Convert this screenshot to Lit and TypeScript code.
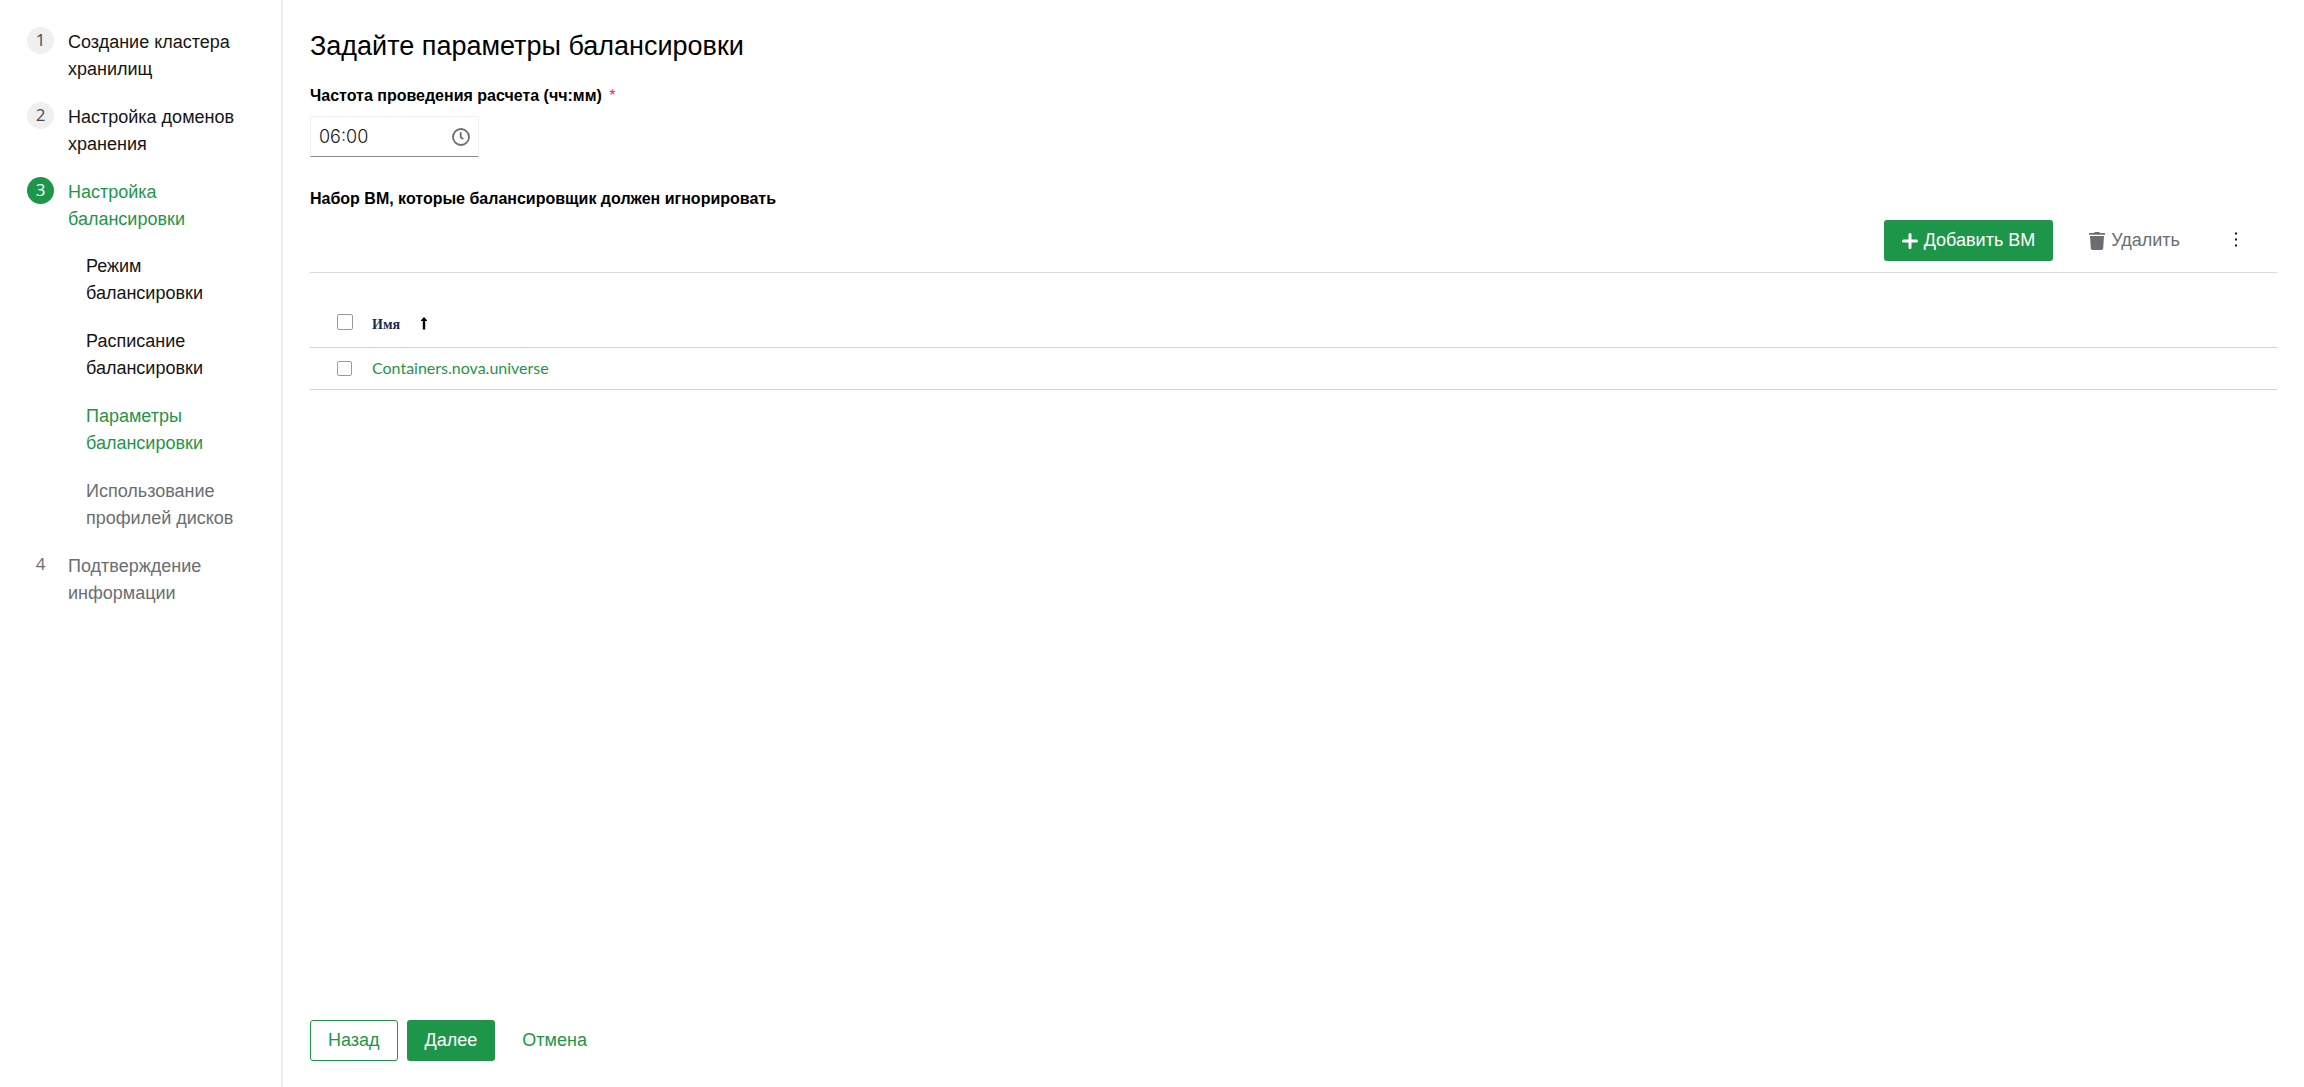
import { LitElement, html, css, svg, nothing } from "lit";
import { customElement, property, state } from "lit/decorators.js";
import { classMap } from "lit/directives/class-map.js";

type StepStatus = "done" | "current" | "pending";

interface Step {
  label: string;
  status: StepStatus;
  children?: Step[];
}

const STEPS: Step[] = [
  { label: "Создание кластера хранилищ", status: "done" },
  { label: "Настройка доменов хранения", status: "done" },
  {
    label: "Настройка балансировки",
    status: "current",
    children: [
      { label: "Режим балансировки", status: "done" },
      { label: "Расписание балансировки", status: "done" },
      { label: "Параметры балансировки", status: "current" },
      { label: "Использование профилей дисков", status: "pending" },
    ],
  },
  { label: "Подтверждение информации", status: "pending" },
];

@customElement("wizard-nav")
export class WizardNav extends LitElement {
  @property({ attribute: false }) steps: Step[] = [];

  static styles = css`
    :host {
      display: block;
      box-sizing: border-box;
      padding: 27px;
      border-right: 2px solid #ededed;
    }
    .list,
    .sublist {
      list-style: none;
      margin: 0;
      padding: 0;
      display: flex;
      flex-direction: column;
    }
    .list {
      gap: 19px;
    }
    .sublist {
      gap: 21px;
      padding: 20px 0 0 59px;
    }
    .step {
      display: grid;
      grid-template-columns: 27px 1fr;
      column-gap: 14px;
      align-items: start;
      width: 100%;
      text-align: left;
    }
    button {
      margin: 0;
      padding: 0;
      border: 0;
      background: none;
      cursor: pointer;
      text-align: left;
      font: 18px/27px "Liberation Sans", Arial, sans-serif;
      color: #151515;
    }
    .number {
      width: 27px;
      height: 27px;
      border-radius: 50%;
      background: #f0f0f0;
      color: #4a4d50;
      font: 17px/26px "Open Sans", sans-serif;
      text-align: center;
    }
    .label {
      padding-top: 2px;
    }
    .current {
      color: #1e9649;
    }
    .current .number {
      background: #1e9649;
      color: #fff;
    }
    .pending {
      color: #6a6e73;
      cursor: default;
    }
    .pending .number {
      background: none;
      color: #6a6e73;
    }
  `;

  private classes(step: Step, top: boolean) {
    return classMap({
      step: top,
      current: step.status === "current",
      pending: step.status === "pending",
    });
  }

  render() {
    return html`
      <nav aria-label="Шаги">
        <ol class="list">
          ${this.steps.map(
            (step, i) => html`
              <li>
                <button type="button" class=${this.classes(step, true)} ?disabled=${step.status === "pending"}>
                  <span class="number">${i + 1}</span>
                  <span class="label">${step.label}</span>
                </button>
                ${step.children
                  ? html`<ol class="sublist">
                      ${step.children.map(
                        (child) => html`<li>
                          <button
                            type="button"
                            class=${this.classes(child, false)}
                            ?disabled=${child.status === "pending"}
                          >${child.label}</button>
                        </li>`
                      )}
                    </ol>`
                  : nothing}
              </li>
            `
          )}
        </ol>
      </nav>
    `;
  }
}

const plusIcon = svg`<svg viewBox="0 0 16 16" width="16" height="16" aria-hidden="true">
  <path d="M8 1.500v13M1.500 8h13" fill="none" stroke="currentColor" stroke-width="3" stroke-linecap="round"/>
</svg>`;

const trashIcon = svg`<svg viewBox="0 0 16 18" width="16" height="18" aria-hidden="true">
  <path fill="currentColor" d="M0.500 1H5L5.600 0.300Q5.800 0 6.200 0h3.600Q10.200 0 10.400 0.300L11 1h4.500q0.500 0 0.500 0.500V2.800H0V1.500Q0 1 0.500 1z"/>
  <path fill="currentColor" d="M1 4h14l-0.800 12.300q-0.100 1.700-1.800 1.700H3.600q-1.700 0-1.800-1.700z"/>
</svg>`;

const clockIcon = svg`<svg viewBox="0 0 18 18" width="18" height="18" aria-hidden="true">
  <circle cx="9" cy="9" r="8" fill="none" stroke="currentColor" stroke-width="1.800"/>
  <path d="M8.700 4.200v5l2.600 1.900" fill="none" stroke="currentColor" stroke-width="1.800"/>
</svg>`;

const kebabIcon = svg`<svg viewBox="0 0 4 18" width="4" height="18" aria-hidden="true">
  <rect x="1" y="0.500" width="2" height="2" fill="currentColor"/>
  <rect x="1" y="6.500" width="2" height="2" fill="currentColor"/>
  <rect x="1" y="12.500" width="2" height="2" fill="currentColor"/>
</svg>`;

const sortIcon = svg`<svg viewBox="0 0 8 14" width="8" height="14" aria-hidden="true">
  <path fill="currentColor" d="M4 0L7 3.200V4H5.200V12.500H2.800V4H1V3.200z"/>
</svg>`;

@customElement("app-root")
export class AppRoot extends LitElement {
  @state() private time = "06:00";
  @state() private machines = ["Containers.nova.universe"];

  static styles = css`
    :host {
      display: grid;
      grid-template-columns: 283px 1fr;
      min-height: 100vh;
      background: #fff;
      color: #000;
      font: 18px/27px "Liberation Sans", Arial, sans-serif;
    }
    .page {
      display: flex;
      flex-direction: column;
      min-width: 0;
      padding: 28px 27px 26px;
    }
    main {
      flex: 1;
    }
    h1 {
      margin: 0;
      font-size: 27px;
      line-height: 36px;
      font-weight: 400;
    }
    .caption {
      display: block;
      margin: 0;
      font-size: 16px;
      line-height: 24px;
      font-weight: 700;
    }
    label.caption {
      padding-top: 20px;
    }
    .required {
      margin-left: 3px;
      color: #f5304f;
      font-weight: 400;
    }
    .time {
      display: flex;
      align-items: center;
      box-sizing: border-box;
      width: 169px;
      height: 41px;
      margin: 8px 0 30px;
      padding: 0 8px;
      border: 1px solid #f0f0f0;
      border-bottom-color: #8a8d90;
      color: #6a6e73;
    }
    .time input {
      flex: 1;
      min-width: 0;
      padding: 0;
      border: 0;
      outline: 0;
      background: none;
      color: #151515;
      font: 300 18px/27px Inter, sans-serif;
    }
    .toolbar {
      display: flex;
      justify-content: flex-end;
      align-items: center;
      padding: 9px 21px 11px 0;
      border-bottom: 1px solid #dcdcdc;
    }
    .btn {
      display: inline-flex;
      align-items: center;
      gap: 6px;
      box-sizing: border-box;
      height: 41px;
      padding: 0 17px;
      border: 1px solid transparent;
      border-radius: 3px;
      background: none;
      color: #1e9649;
      font: inherit;
      cursor: pointer;
    }
    .primary {
      background: #1e9649;
      color: #fff;
    }
    .secondary {
      border-color: #1e9649;
    }
    .plain {
      color: #6a6e73;
    }
    .toolbar .plain {
      margin-left: 18px;
    }
    .toolbar .kebab {
      color: #151515;
    }
    table {
      width: 100%;
      margin-top: 28px;
      border-collapse: collapse;
    }
    th,
    td {
      padding: 0;
      text-align: left;
      border-bottom: 1px solid #d2d2d2;
    }
    th {
      height: 46px;
      color: #1b2a4e;
      font: 700 14px/21px "Liberation Serif", serif;
    }
    td {
      height: 41px;
    }
    .pick {
      width: 35px;
      padding-left: 27px;
    }
    th.pick {
      padding-bottom: 4px;
      height: 42px;
    }
    td.pick {
      padding-bottom: 1px;
      height: 40px;
    }
    .pick input {
      display: block;
      appearance: none;
      width: 15px;
      height: 15px;
      margin: 0;
      border: 1px solid #9a9aa6;
      border-radius: 2px;
      background: #fff;
    }
    th.pick input {
      width: 16px;
      height: 16px;
    }
    .pick input:checked {
      background: #1e9649;
    }
    .sort {
      display: inline-flex;
      align-items: center;
      gap: 20px;
      padding: 0;
      border: 0;
      background: none;
      color: inherit;
      font: inherit;
      cursor: pointer;
    }
    .sort svg {
      color: #000;
    }
    td a {
      color: #1e9649;
      text-decoration: none;
      font: 16px/24px Lato, sans-serif;
    }
    footer {
      display: flex;
      gap: 9px;
    }
  `;

  render() {
    return html`
      <wizard-nav .steps=${STEPS}></wizard-nav>
      <div class="page">
        <main>
          <h1>Задайте параметры балансировки</h1>
          <label class="caption" for="time">Частота проведения расчета (чч:мм) <span class="required">*</span></label>
          <div class="time">
            <input
              id="time"
              type="text"
              required
              .value=${this.time}
              @input=${(e: Event) => (this.time = (e.target as HTMLInputElement).value)}
            />
            ${clockIcon}
          </div>
          <h2 class="caption">Набор ВМ, которые балансировщик должен игнорировать</h2>
          <div class="toolbar">
            <button type="button" class="btn primary">${plusIcon}Добавить ВМ</button>
            <button type="button" class="btn plain" disabled>${trashIcon}Удалить</button>
            <button type="button" class="btn plain kebab" aria-label="Действия">${kebabIcon}</button>
          </div>
          <table>
            <thead>
              <tr>
                <th class="pick"><input type="checkbox" aria-label="Выбрать все" /></th>
                <th aria-sort="ascending"><button type="button" class="sort">Имя${sortIcon}</button></th>
              </tr>
            </thead>
            <tbody>
              ${this.machines.map(
                (name) => html`<tr>
                  <td class="pick"><input type="checkbox" aria-label=${name} /></td>
                  <td><a href="#">${name}</a></td>
                </tr>`
              )}
            </tbody>
          </table>
        </main>
        <footer>
          <button type="button" class="btn secondary">Назад</button>
          <button type="button" class="btn primary">Далее</button>
          <button type="button" class="btn">Отмена</button>
        </footer>
      </div>
    `;
  }
}
